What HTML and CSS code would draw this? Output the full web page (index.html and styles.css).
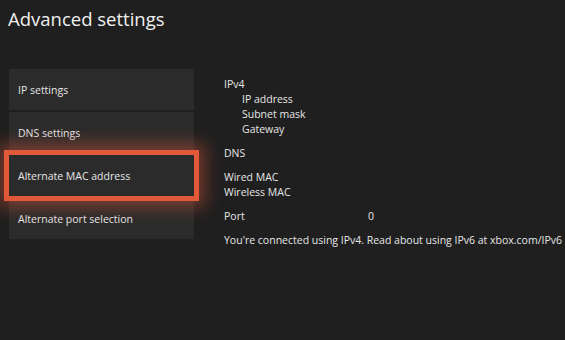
FILE: index.html
```html
<!DOCTYPE html>
<html lang="en">
<head>
    <meta charset="UTF-8">
    <title>Advanced settings</title>
    <link rel="stylesheet" href="styles.css">
</head>
<body>
    <h1 class="title">Advanced settings</h1>

    <div class="layout">
        <div class="menu">
            <div class="tile">IP settings</div>
            <div class="tile">DNS settings</div>
            <div class="tile selected">Alternate MAC address</div>
            <div class="tile">Alternate port selection</div>
        </div>

        <div class="details">
            <div class="group">
                <div class="row">IPv4</div>
                <div class="row sub">IP address</div>
                <div class="row sub">Subnet mask</div>
                <div class="row sub">Gateway</div>
            </div>
            <div class="group">
                <div class="row">DNS</div>
            </div>
            <div class="group">
                <div class="row">Wired MAC</div>
                <div class="row">Wireless MAC</div>
            </div>
            <div class="group">
                <div class="row"><span class="label">Port</span><span>0</span></div>
            </div>
            <div class="row">You're connected using IPv4. Read about using IPv6 at xbox.com/IPv6</div>
        </div>
    </div>
</body>
</html>
```

FILE: styles.css
```css
body {
    margin: 0;
    background: #1f1f1f;
    color: #e6e6e6;
    font-family: "Open Sans", sans-serif;
    width: 565px;
    height: 340px;
    overflow: hidden;
}

.title {
    margin: 0;
    padding: 6px 0 0 8px;
    font-size: 18.5px;
    font-weight: 400;
    line-height: 25px;
    color: #f0f0f0;
}

.layout {
    display: flex;
    margin-top: 38px;
}

.menu {
    display: flex;
    flex-direction: column;
    gap: 2px;
    width: 185px;
    margin-left: 9px;
}

.tile {
    height: 41px;
    display: flex;
    align-items: center;
    padding-left: 9px;
    background: #2b2b2b;
    font-size: 10.5px;
}

/* focus ring sits outside the tile, so pull it out by the border width */
.tile.selected {
    position: relative;
    box-sizing: border-box;
    height: 51px;
    margin: -5px -5px;
    border: 5px solid #e2593a;
    box-shadow: 0 0 16px 6px rgba(226, 89, 58, 0.45);
}

.details {
    margin-left: 30px;
    margin-top: 8px;
    font-size: 10.5px;
    line-height: 15px;
}

.group {
    margin-bottom: 9px;
}

.row.sub {
    padding-left: 18px;
}

.label {
    display: inline-block;
    width: 144px;
}
```
